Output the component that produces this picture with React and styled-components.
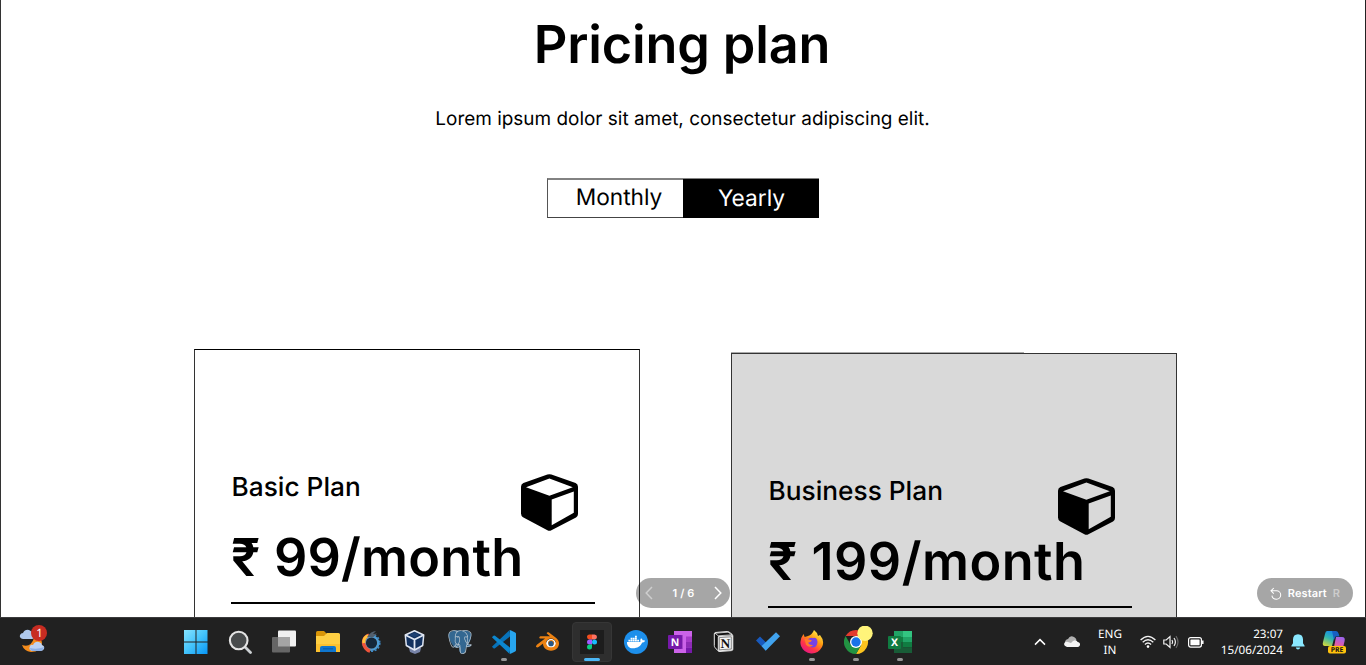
import React from "react";
import styled, { createGlobalStyle } from "styled-components";
import { SiBlender, SiPostgresql } from "react-icons/si";
import { FaDocker } from "react-icons/fa";

const Global = createGlobalStyle`
  * { box-sizing: border-box; }
  html, body { margin: 0; padding: 0; background: #fff; overflow: hidden; }
  body { font-family: Inter, "Liberation Sans", sans-serif; color: #000; text-rendering: geometricPrecision; }
  svg { display: block; flex: none; }
`;

const Screen = styled.div`
  width: 1366px;
  height: 665px;
  display: flex;
  flex-direction: column;
  overflow: hidden;
`;

const Page = styled.main`
  position: relative;
  height: 617px;
  flex: none;
  overflow: hidden;
  background: #fff;
  border-left: 1px solid #333;
  border-right: 1px solid #222;
`;

const Hero = styled.header`
  height: 349px;
  padding-top: 12px;
  display: flex;
  flex-direction: column;
  align-items: center;
`;

const Title = styled.h1`
  margin: 0;
  padding-right: 2px;
  font-size: 52.2px;
  line-height: 64px;
  font-weight: 600;
  letter-spacing: -0.16px;
  white-space: nowrap;
`;

const Subtitle = styled.p`
  margin: 31px 0 0;
  padding-right: 1px;
  font-size: 18.95px;
  line-height: 24px;
  white-space: nowrap;
`;

const Toggle = styled.div`
  display: flex;
  width: 272px;
  height: 40px;
  margin: 47px 1px 0 0;
`;

const Option = styled.div`
  width: 136px;
  height: 40px;
  padding-top: ${(p) => (p.$on ? 6 : 4)}px;
  padding-left: ${(p) => (p.$on ? 2 : 8)}px;
  text-align: center;
  font-size: 22.7px;
  line-height: 28px;
  color: ${(p) => (p.$on ? "#fff" : "#000")};
  background: ${(p) => (p.$on ? "#000" : "#fff")};
  border: solid ${(p) => (p.$on ? "#000" : "#444")};
  border-width: ${(p) => (p.$on ? "1px 0 1px 0" : "2px 0 1px 1px")};
  border-top-color: #828282;
  border-left-color: #555;
`;

const Plans = styled.section`
  display: flex;
  align-items: flex-start;
  gap: 91px;
  padding-left: 193px;
`;

const Card = styled.article`
  position: relative;
  width: 446px;
  height: 420px;
  flex: none;
  margin-top: ${(p) => p.$drop}px;
  padding: 124px 0 0 36px;
  background: ${(p) => p.$fill};
  border: 1px solid #333;
  border-top-color: ${(p) => p.$edge};
`;

const EdgeShade = styled.i`
  position: absolute;
  top: -2px;
  left: -1px;
  width: 293px;
  height: 1px;
  background: #aaa;
`;

const CardHead = styled.div`
  display: flex;
  justify-content: space-between;
  width: 347px;
  height: 57px;
`;

const PlanName = styled.h2`
  margin: -2px 0 0 0.5px;
  font-size: 26.25px;
  line-height: 32px;
  font-weight: 500;
  white-space: nowrap;
`;

const Price = styled.div`
  margin-top: -6px;
  font-size: 52.2px;
  line-height: 64px;
  font-weight: 600;
  letter-spacing: ${(p) => p.$track}px;
  white-space: nowrap;
`;

const Rule = styled.div`
  width: 364px;
  height: 2px;
  margin-top: 13px;
  background: #000;
`;

const Pill = styled.div`
  position: absolute;
  top: 578px;
  left: ${(p) => p.$x}px;
  width: ${(p) => p.$w}px;
  height: 30px;
  padding: ${(p) => p.$pad};
  display: flex;
  align-items: center;
  justify-content: space-between;
  border-radius: 15px;
  background: rgba(0, 0, 0, 0.35);
  color: #fff;
  font-size: 11px;
  font-weight: 600;
  letter-spacing: 0.1px;
`;

const Faint = styled.span`
  color: rgba(255, 255, 255, 0.45);
`;

const Taskbar = styled.footer`
  height: 48px;
  flex: none;
  display: flex;
  background: #212121;
  border-top: 1px solid #3b3b3c;
`;

const Widget = styled.div`
  width: 174px;
  padding: 6px 0 0 18px;
`;

const Apps = styled.div`
  display: flex;
  width: 748px;
`;

const AppButton = styled.div`
  position: relative;
  width: 44px;
  height: 47px;
  display: flex;
  align-items: center;
  justify-content: center;
  padding-top: 1px;
`;

const Active = styled.div`
  width: 40px;
  height: 40px;
  display: flex;
  align-items: center;
  justify-content: center;
  border-radius: 4px;
  background: #2e2e2e;
  border: 1px solid #363636;
`;

const Running = styled.i`
  position: absolute;
  bottom: 4px;
  left: ${(p) => (p.$on ? 14 : 19)}px;
  width: ${(p) => (p.$on ? 16 : 6)}px;
  height: 3px;
  border-radius: 2px;
  background: ${(p) => (p.$on ? "#4cb8f7" : "#969696")};
`;

const Tray = styled.div`
  display: flex;
  align-items: center;
  padding-left: 112px;
  padding-top: 1px;
  color: #fff;
  font-family: "Noto Sans", "Open Sans", sans-serif;
  font-size: 11.7px;
  line-height: 16px;
`;

const TrayItem = styled.div`
  width: ${(p) => p.$w}px;
  margin-left: ${(p) => p.$gap || 0}px;
  text-align: ${(p) => p.$align || "center"};
  white-space: nowrap;
`;

const Cube = () => (
  <svg width="57" height="57" viewBox="0 0 57 57">
    <path
      fillRule="evenodd"
      d="M26.4.6Q28.4-.3 30.4.6L54.6 8.9Q57 10 57 12.8V40Q57 42.4 55 43.5L30.4 56.2Q28.4 57.3 26.4 56.2L2 43.2Q0 42 0 39.6V12.8Q0 10 2.4 8.9ZM28.4 4.6L5 13.2 28.4 21.7 51.8 13.2ZM30.7 25.4V51.2L52.8 38.8V17.6Z"
    />
  </svg>
);

const Chevron = ({ left }) => (
  <svg width="8" height="14" viewBox="0 0 8 14" fill="none" stroke="#fff" strokeWidth="1.5" strokeOpacity={left ? 0.45 : 1}>
    <path d={left ? "M7 1L1.2 7 7 13" : "M1 1L6.8 7 1 13"} />
  </svg>
);

const Weather = () => (
  <svg width="32" height="32" viewBox="18 624 32 32">
    <path d="M34 638q7-3 8 5-1 9-11 9-7-1-9-7 9 3 12-7z" fill="#f58c1b" />
    <path d="M23 639q-4-1-3-4 1-2 3-2 2-4 6-3 3 1 4 4 3 1 2 4l-3 1z" fill="#afc9ed" />
    <path d="M32 651q-4-1-2-5 1-2 3-1 2-4 6-3 3 1 3 3 3 1 2 4-1 2-4 2z" fill="#bdd2f2" />
    <path d="M32 651q-2-1-2-3 7 2 14-1-1 4-4 4z" fill="#8eb0e4" />
    <circle cx="39" cy="633" r="8" fill="#c72c22" />
    <text x="39.5" y="637" fontSize="11.5" textAnchor="middle" fill="#fff" fontFamily="Noto Sans, sans-serif">1</text>
  </svg>
);

const Windows = () => (
  <svg width="24" height="24" viewBox="0 0 24 24">
    <defs>
      <linearGradient id="win" gradientUnits="userSpaceOnUse" x1="0" y1="0" x2="24" y2="24">
        <stop offset="0" stopColor="#86e3ff" /><stop offset=".5" stopColor="#43c3fb" /><stop offset="1" stopColor="#0694f5" />
      </linearGradient>
    </defs>
    <path fill="url(#win)" d="M0 0h11.500v11.500H0zM12.500 0H23.500v11.500H12.500zM0 12.500h11.500V24H0zM12.500 12.500h11V24h-11z" />
  </svg>
);

const Search = () => (
  <svg width="24" height="24" viewBox="0 0 24 24">
    <path d="M17.5 17.5l5 5" stroke="#ccd0d3" strokeWidth="2.8" strokeLinecap="round" />
    <circle cx="10.7" cy="10.5" r="8.8" fill="#484b4c" stroke="#e4e4e4" strokeWidth="2.1" />
  </svg>
);

const TaskView = () => (
  <svg width="24" height="24" viewBox="0 0 24 24">
    <rect x="6" y=".5" width="18" height="16" rx="1" fill="#f1f1f1" />
    <rect x="0" y="7" width="18" height="15.5" rx="1" fill="#666" />
    <path d="M6 7h12v9.5H6z" fill="#a5a5a5" />
  </svg>
);

const Explorer = () => (
  <svg width="24" height="24" viewBox="0 0 24 24">
    <path d="M0 2.5Q0 1 1.5 1H8l2.5 2.5V9H0z" fill="#d99508" />
    <path d="M0 6h8l3-3h11.5Q24 3 24 4.5V22H0z" fill="#ffcf43" />
    <path d="M0 14h24v8H0z" fill="#fcc12f" />
    <path d="M4 22v-4q0-2 2-2h12q2 0 2 2v4z" fill="#0f76ce" />
    <path d="M7 18.8h10" stroke="#0759a5" />
  </svg>
);

const Gear = () => (
  <svg width="24" height="24" viewBox="0 0 24 24" fill="none">
    <circle cx="11.500" cy="13" r="8.300" stroke="#3e8ac7" strokeWidth="1.6" strokeDasharray="2 1.8" />
    <circle cx="11.500" cy="13" r="6.700" stroke="#4e9bd3" strokeWidth="2.4" />
    <circle cx="11.500" cy="13" r="5" fill="#14283c" />
    <path d="M9 5Q2 8 4 15q2 5 6 6" stroke="#ef543b" strokeWidth="3.4" />
    <path d="M8 5.500Q3 8 4 13" stroke="#ffc23c" strokeWidth="3" />
    <path d="M7 7Q11 1 16 1l-3 3 4-.5-4 4z" fill="#53606e" />
  </svg>
);

const VirtualBox = () => (
  <svg width="24" height="24" viewBox="0 0 24 24">
    <path d="M5 18l6-2 6 2-1 4-5 2-5-2z" fill="#7783a7" />
    <path d="M10.500 .8l9.200 4.200-1 10.500L10.500 20l-8.200-4.500L1.300 5z" fill="#12315f" stroke="#e0e7f3" strokeWidth="1.500" strokeLinejoin="round" />
    <path d="M1.300 5l9.200 4.500L19.700 5M10.500 9.500V20" stroke="#e0e7f3" strokeWidth="1.800" fill="none" />
    <path d="M10.500 2.600l5 2.300-5 2.300-5-2.300z" fill="#1d4072" />
  </svg>
);

const Postgres = () => (
  <svg width="24" height="24" viewBox="0 0 24 24">
    <path d="M5 1Q10-.3 12.500 1 20-.8 22.800 3q1.500 5-2.500 11.500l3 .5q-1 2.500-5.500 2.300-.2 6.700-3.300 6.400-3.300.6-3.600-6.700-2.500 1.500-5 0Q-.5 8 .8 3.500 2 1.500 5 1z" fill="#336791" />
    <SiPostgresql size={24} color="#b4c3cf" />
  </svg>
);

const Code = () => (
  <svg width="24" height="24" viewBox="0 0 24 24">
    <path d="M.4 16.2L17.4.3 18.5 6.1 3 18.2q-.8.6-1.5 0L.4 17.3q-.6-.5 0-1.1z" fill="#0872b9" />
    <path d="M.4 7.8L17.4 23.7 18.5 17.9 3 5.8q-.8-.6-1.5 0L.4 6.700q-.6.5 0 1.100z" fill="#0c87cf" />
    <path d="M17.2.4Q17.8 0 18.6.3l4.500 2.100q.9.5.9 1.400v16.400q0 .9-.9 1.400l-4.500 2.100q-.8.3-1.400-.1.800.3.8-1V1.400q0-1.300-.8-1z" fill="#27a5ee" />
  </svg>
);

const Blender = () => (
  <svg width="24" height="24" viewBox="0 0 24 24">
    <circle cx="15" cy="14" r="5" fill="#fff" />
    <SiBlender size={23} color="#ed8212" />
    <circle cx="15" cy="13.700" r="2.600" fill="#265787" />
  </svg>
);

const Figma = () => (
  <svg width="24" height="24" viewBox="0 0 24 24">
    <path d="M0 0h24v24H0z" fill="#1d1d1d" />
    <path d="M12 4.500H9.500a2.500 2.500 0 000 5H12z" fill="#f24e1e" />
    <path d="M12 4.500h2.500a2.500 2.500 0 010 5H12z" fill="#ff7262" />
    <path d="M12 9.500H9.500a2.500 2.500 0 000 5H12z" fill="#a259ff" />
    <circle cx="14.500" cy="12" r="2.500" fill="#1abcfe" />
    <path d="M12 14.500H9.500a2.500 2.500 0 102.500 2.500z" fill="#0acf83" />
  </svg>
);

const DockerDisc = styled.div`
  width: 24px;
  height: 24px;
  border-radius: 50%;
  background: #1d8feb;
  color: #fff;
  display: flex;
  align-items: center;
  justify-content: center;
`;

const OneNote = () => (
  <svg width="24" height="24" viewBox="0 0 24 24">
    <path d="M6 1h18v22H6z" fill="#cc63e9" />
    <path d="M18 6.500h6V12h-6z" fill="#a63bc9" /><path d="M18 12h6v5.500h-6z" fill="#8d2bb5" /><path d="M18 17.500h6V23h-6z" fill="#7719aa" />
    <path d="M6 5h9v14H6z" fill="#a344c6" />
    <rect y="5" width="14" height="14" rx="1" fill="#7719aa" />
    <text x="7" y="15.800" fontSize="10.500" fontWeight="700" textAnchor="middle" fill="#fff" fontFamily="Noto Sans, sans-serif">N</text>
  </svg>
);

const Notion = () => (
  <svg width="24" height="24" viewBox="0 0 24 24">
    <path d="M3.200 2.500l12-1q1-.1 1.800.5l3 2.200q.8.600.8 1.800v13.300q0 1.200-1.300 1.300L8 21.500q-1.400.1-2.100-.8L3 17.500q-.7-.8-.7-2V4q0-1.300.9-1.500z" fill="#111" stroke="#e8e8e8" />
    <path d="M3 3.200l3.200 2.600 13.800-1-4-2.600z" fill="#111" stroke="#eee" strokeWidth=".8" />
    <path d="M6.300 6.700l14-.9v14l-14 1z" fill="#f1f1f1" stroke="#eee" />
    <path d="M7.300 7.600l12-.8v12.200l-12 .8z" fill="#f5f5f5" stroke="#222" strokeWidth=".5" />
    <text x="13.300" y="17.800" fontSize="13.500" fontWeight="700" textAnchor="middle" fill="#111" fontFamily="Liberation Serif, serif">N</text>
  </svg>
);

const Todo = () => (
  <svg width="24" height="24" viewBox="0 0 24 24">
    <path d="M0 10.500l4-4 9.700 9.600-4 4.300z" fill="#185abd" />
    <path d="M5.600 16.100L20 2.300l4 4L9.700 20.700z" fill="#41a3ee" />
  </svg>
);

const Firefox = () => (
  <svg width="24" height="24" viewBox="0 0 24 24">
    <defs>
      <linearGradient id="fox" x1=".85" y1=".05" x2=".25" y2="1">
        <stop offset="0" stopColor="#fff34f" /><stop offset=".4" stopColor="#ff980e" /><stop offset=".7" stopColor="#ff3647" /><stop offset="1" stopColor="#e31587" />
      </linearGradient>
    </defs>
    <path d="M3.500 4l1.200 3 3.300-1q4-1 6-6 3 2 4 6l2-1q5 6 2 12-4 7-11 6.500-7-.5-10-7.500-2-6 2.500-12z" fill="url(#fox)" />
    <path d="M7 11q2-4 6-3 4-1 4.500 4-.5 5.500-5 5.500Q7.500 17 7 11z" fill="#7542e5" />
    <path d="M4.500 9q4-.5 7.500 1.500-1 2-4 2.300 2 3 5.500 2-4 3.700-7.500 0z" fill="#ff7a2a" />
  </svg>
);

const Chrome = () => (
  <svg width="30" height="28" viewBox="0 0 30 28">
    <path d="M1.600 10A12 12 0 0122.400 10H12z" fill="#e33b2e" />
    <path d="M22.400 10A12 12 0 0112 28l5.200-9L12 10z" fill="#fcc31e" />
    <path d="M1.600 10A12 12 0 0012 28l5.200-9-10.400 0z" fill="#229342" />
    <circle cx="12" cy="16" r="6" fill="#fff" /><circle cx="12" cy="16" r="4.700" fill="#1a73e8" />
    <circle cx="21" cy="7.300" r="7.700" fill="#fff47a" />
  </svg>
);

const ChromeSlot = styled.div`
  margin: -4px 0 0 6px;
`;

const Excel = () => (
  <svg width="24" height="24" viewBox="0 0 24 24">
    <path d="M6 1h9v6H6z" fill="#21a366" /><path d="M15 1h9v6h-9z" fill="#33c481" />
    <path d="M6 7h9v5H6z" fill="#107c41" /><path d="M15 7h9v5h-9z" fill="#21a366" />
    <path d="M6 12h9v6H6z" fill="#185c37" /><path d="M15 12h9v5.500h-9z" fill="#107c41" />
    <path d="M6 17.500h18V23H6z" fill="#185c37" />
    <rect y="6" width="13" height="13" rx="1" fill="#107c41" />
    <text x="6.500" y="16.400" fontSize="10.500" fontWeight="700" textAnchor="middle" fill="#fff" fontFamily="Noto Sans, sans-serif">X</text>
  </svg>
);

const Up = () => (
  <svg width="12" height="8" viewBox="0 0 12 8"><path d="M1 6.600l5-5 5 5" fill="none" stroke="#fff" strokeWidth="1.500" /></svg>
);

const Cloud = () => (
  <svg width="16" height="12" viewBox="0 0 16 12">
    <path d="M1 9Q0 4 4 3q2-4 6-2 2 1 2.500 3l-8 6z" fill="#b0b0b0" />
    <path d="M3 11q-3-1-3-3 1-3 4-2l3 1q3-4 6-2 0 1 1 1 3 1 1.600 4-1 1-2 1z" fill="#f4f4f4" />
  </svg>
);

const Wifi = () => (
  <svg width="16" height="14" viewBox="0 0 16 14" fill="none" stroke="#f2f2f2" strokeWidth="1.300">
    <path d="M.6 5Q8-2.400 15.400 5M2.700 7.200q5.300-5 10.600 0M4.900 9.400q3.100-2.800 6.200 0" />
    <circle cx="8" cy="11.600" r="1.300" fill="#fff" stroke="none" />
  </svg>
);

const Volume = () => (
  <svg width="16" height="14" viewBox="0 0 16 14" fill="none" stroke="#f2f2f2" strokeWidth="1.200">
    <path d="M.8 5v4h2.400L7 12.500v-11L3.200 5zM9 5q1.300 2 0 4M11 3q2.800 4 0 8" />
    <path d="M13 1.200q4 5.800 0 11.600" stroke="#656565" />
  </svg>
);

const Battery = () => (
  <svg width="16" height="11" viewBox="0 0 16 11">
    <rect x=".6" y=".6" width="12.800" height="9.500" rx="2" fill="none" stroke="#fff" strokeWidth="1.200" />
    <rect x="2.400" y="2.400" width="9.200" height="5.900" rx=".6" fill="#fff" /><path d="M14.800 3.600v3.400" stroke="#fff" strokeWidth="1.500" />
  </svg>
);

const Bell = () => (
  <svg width="14" height="16" viewBox="0 0 14 16">
    <path d="M7 .2q4.800.2 5 5v4l1.600 2.600v.8H.4v-.8L2 9.200v-4Q2.200.4 7 .2zM4.800 13.600h4.400Q8.800 15.500 7 15.500t-2.200-1.900z" fill="#8ae8ff" />
  </svg>
);

const Copilot = () => (
  <svg width="24" height="24" viewBox="0 0 24 24">
    <defs>
      <linearGradient id="cpa" x1=".6" y1="0" x2=".2" y2="1"><stop offset="0" stopColor="#188be8" /><stop offset=".45" stopColor="#2fb5b0" /><stop offset="1" stopColor="#d5d939" /></linearGradient>
      <linearGradient id="cpb" x1=".6" y1="0" x2=".3" y2="1"><stop offset="0" stopColor="#9d64ed" /><stop offset=".5" stopColor="#d95bae" /><stop offset="1" stopColor="#ff8b60" /></linearGradient>
    </defs>
    <path d="M5 1h9l-4 15H3Q0 16 1 12L3 4q.6-3 2-3z" fill="url(#cpa)" />
    <path d="M10 1h4q2 0 2.800 3l.7 2.500h-4L12 10z" fill="#165fc3" />
    <path d="M14 7h6q3.500 0 2.600 4l-1.400 6-10 4z" fill="url(#cpb)" />
    <rect x="6" y="16" width="18" height="7.500" rx="2" fill="#ffc20c" />
    <text x="15" y="22.200" fontSize="6.800" fontWeight="700" textAnchor="middle" fill="#111" fontFamily="Noto Sans, sans-serif">PRE</text>
  </svg>
);

const Restart = () => (
  <svg width="12" height="13" viewBox="0 0 12 13" fill="none" stroke="#fff" strokeWidth="1.050">
    <path d="M3.800 1L1 3.800l2.800 2.800M1 3.800h5.500a4.200 4.200 0 010 8.400Q2.600 12.200 1.900 8.600" />
  </svg>
);

const apps = [
  { icon: <Windows /> }, { icon: <Search /> }, { icon: <TaskView /> }, { icon: <Explorer /> }, { icon: <Gear /> },
  { icon: <VirtualBox /> },
  { icon: <Postgres /> },
  { icon: <Code />, run: true },
  { icon: <Blender /> },
  { icon: <Active><Figma /></Active>, active: true },
  { icon: <DockerDisc><FaDocker size={18} /></DockerDisc> },
  { icon: <OneNote /> }, { icon: <Notion /> }, { icon: <Todo /> },
  { icon: <Firefox />, run: true },
  { icon: <ChromeSlot><Chrome /></ChromeSlot>, run: true },
  { icon: <Excel />, run: true },
];

const plans = [
  { name: "Basic Plan", price: "₹ 99/month", fill: "#fff", edge: "#000", drop: 0, track: 0.22 },
  { name: "Business Plan", price: "₹ 199/month", fill: "#d9d9d9", edge: "#333", drop: 4, track: 0.48 },
];

export default function App() {
  return (
    <Screen>
      <Global />
      <Page>
        <Hero>
          <Title>Pricing plan</Title>
          <Subtitle>Lorem ipsum dolor sit amet, consectetur adipiscing elit.</Subtitle>
          <Toggle>
            <Option>Monthly</Option>
            <Option $on>Yearly</Option>
          </Toggle>
        </Hero>
        <Plans>
          {plans.map((p) => (
            <Card key={p.name} $fill={p.fill} $drop={p.drop} $edge={p.edge}>
              {p.drop > 0 && <EdgeShade />}
              <CardHead>
                <PlanName>{p.name}</PlanName>
                <Cube />
              </CardHead>
              <Price $track={p.track}>{p.price}</Price>
              <Rule />
            </Card>
          ))}
        </Plans>
        <Pill $x={635} $w={94} $pad="0 8px 0 9px">
          <Chevron left />
          <span>1 / 6</span>
          <Chevron />
        </Pill>
        <Pill $x={1256} $w={96} $pad="0 13px 0 13px">
          <Restart />
          <span>Restart</span>
          <Faint>R</Faint>
        </Pill>
      </Page>
      <Taskbar>
        <Widget><Weather /></Widget>
        <Apps>
          {apps.map((a, i) => (
            <AppButton key={i}>
              {a.icon}
              {(a.run || a.active) && <Running $on={a.active} />}
            </AppButton>
          ))}
        </Apps>
        <Tray>
          <TrayItem $w={12}><Up /></TrayItem>
          <TrayItem $w={16} $gap={18}><Cloud /></TrayItem>
          <TrayItem $w={30} $gap={15}>ENG<br />IN</TrayItem>
          <TrayItem $w={16} $gap={15}><Wifi /></TrayItem>
          <TrayItem $w={16} $gap={7}><Volume /></TrayItem>
          <TrayItem $w={16} $gap={9}><Battery /></TrayItem>
          <TrayItem $w={70} $gap={9} $align="right">23:07<br />15/06/2024</TrayItem>
          <TrayItem $w={14} $gap={8}><Bell /></TrayItem>
          <TrayItem $w={24} $gap={17}><Copilot /></TrayItem>
        </Tray>
      </Taskbar>
    </Screen>
  );
}
